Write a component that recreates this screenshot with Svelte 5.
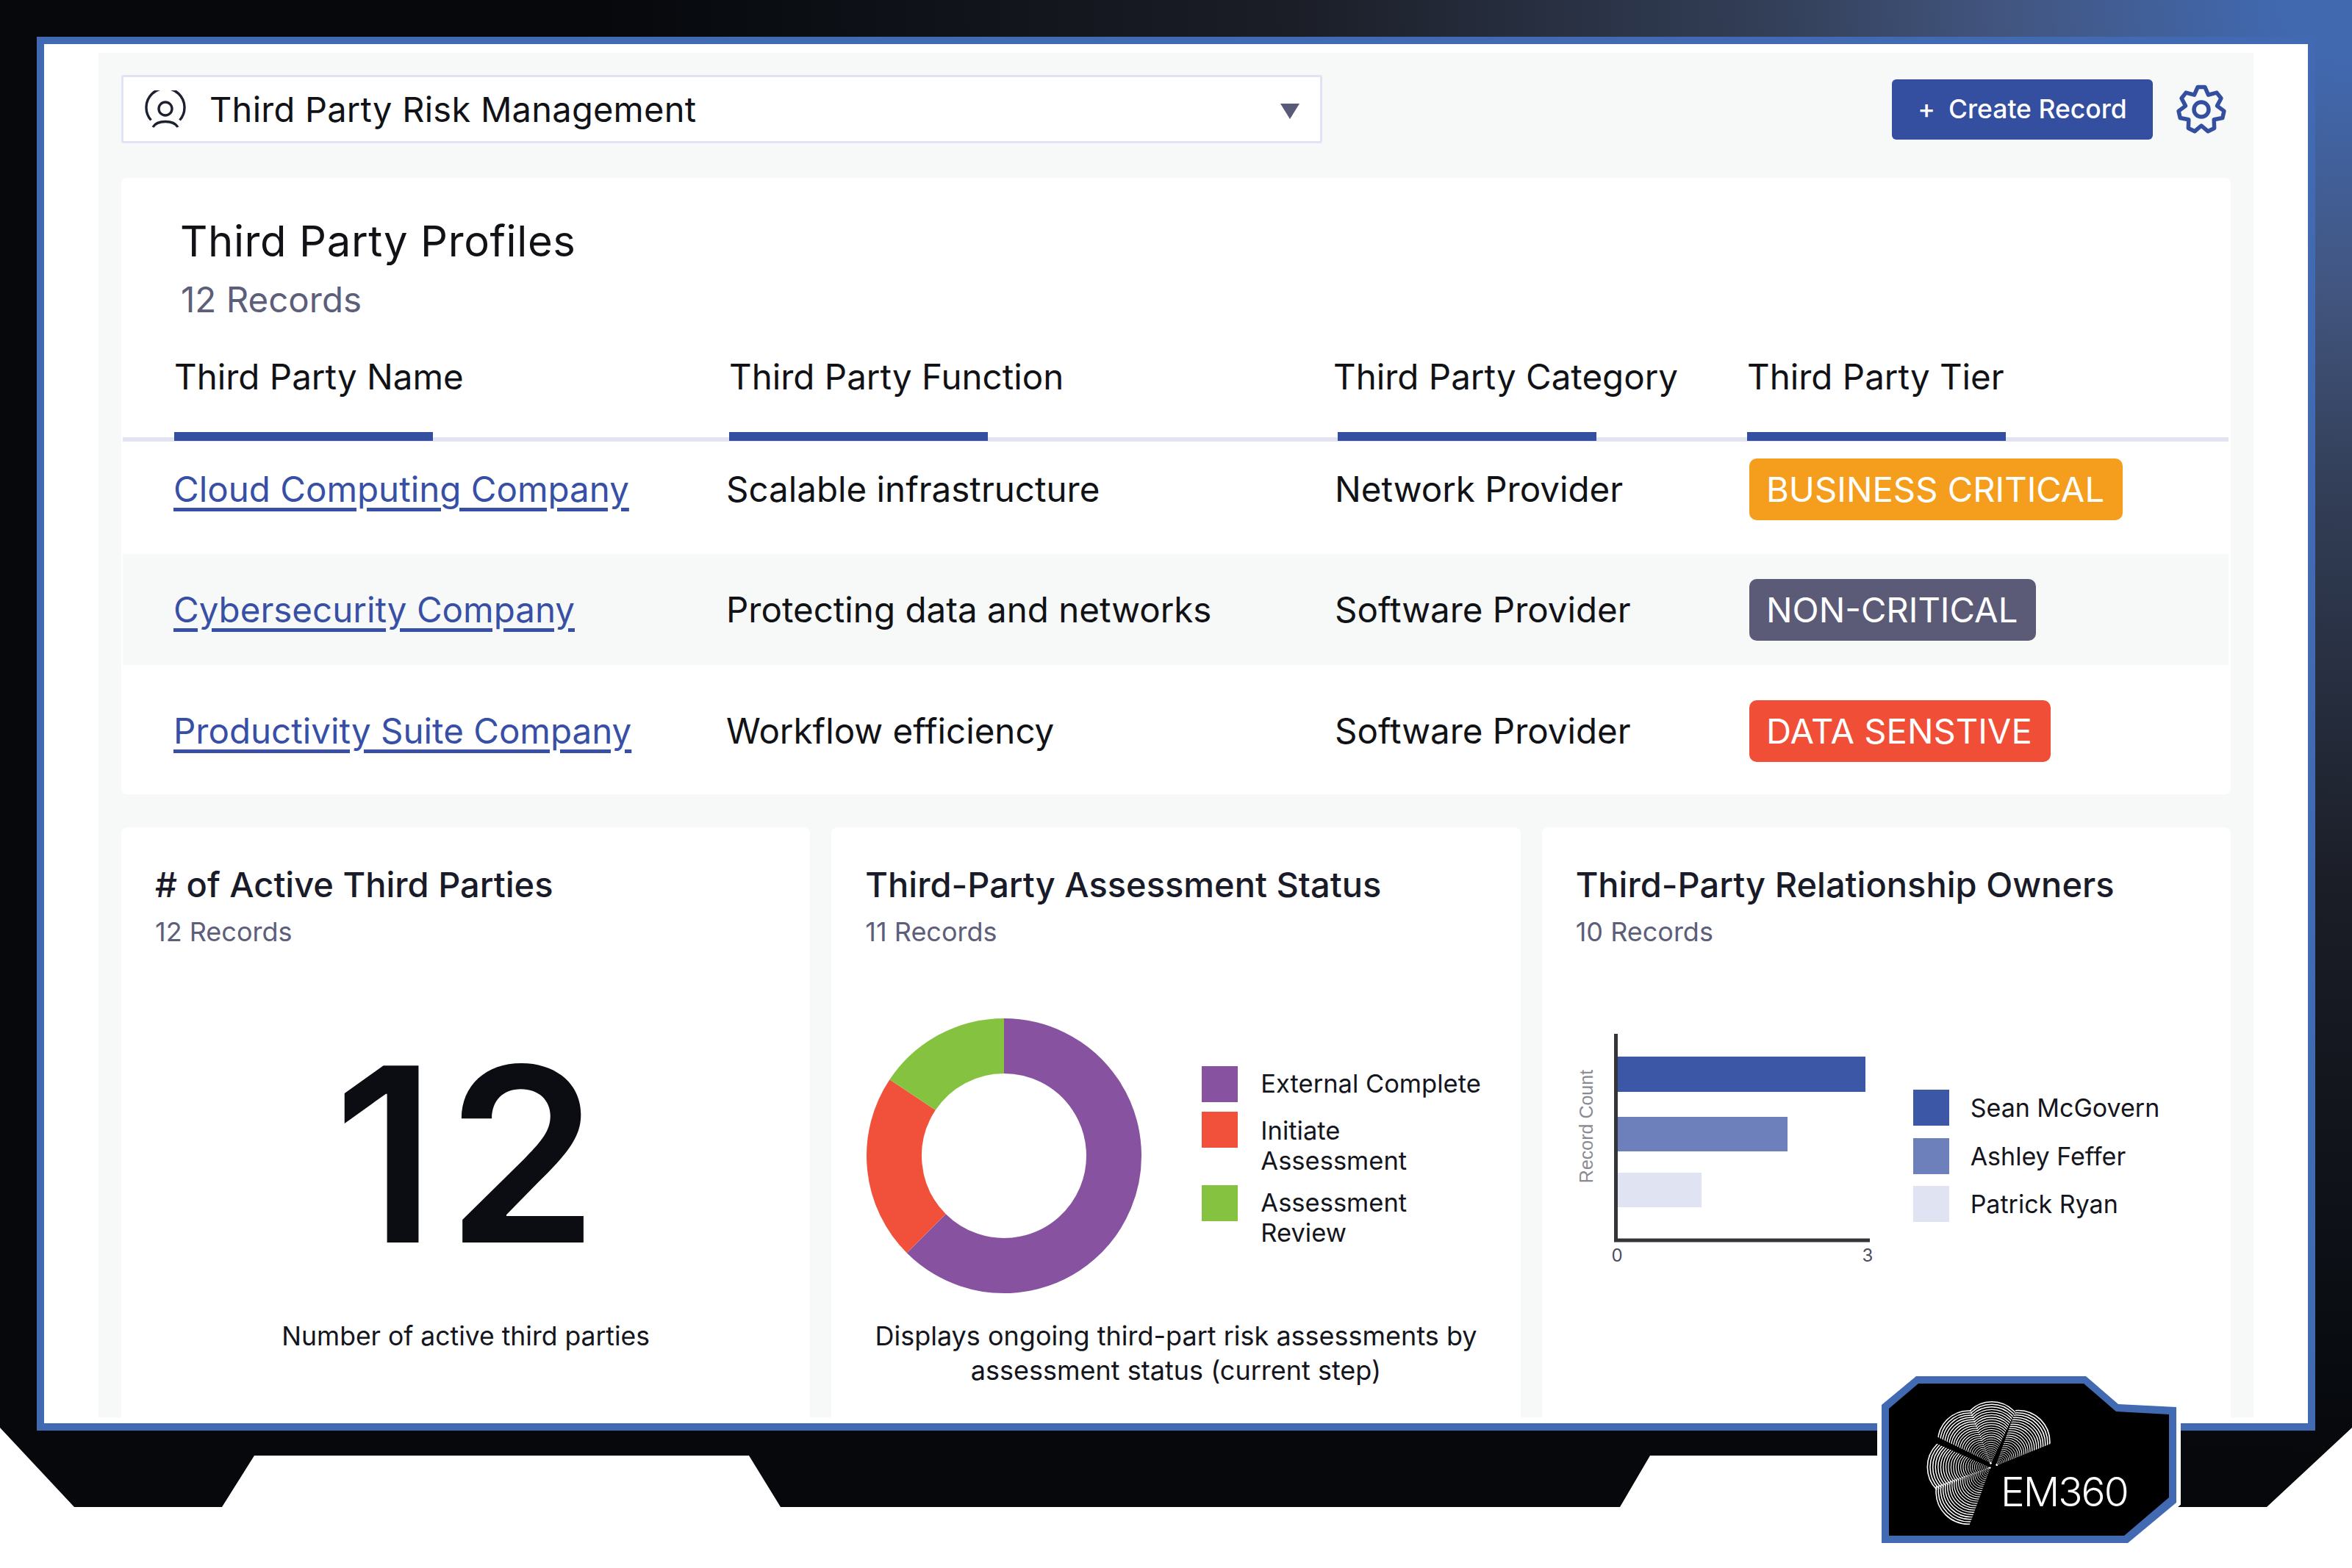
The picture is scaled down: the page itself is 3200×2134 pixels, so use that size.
<script>
  const z = (x, y) => [2600 + x / 3, 1890 + y / 3];
  const petals = [
    { id: 'pa', apex: [325, 305], c: [330, 178], R: 42, clip: [[325, 310], [224, 50], [224, 20], [445, 20], [445, 50]] },
    { id: 'pb', apex: [325, 305], c: [235, 215], R: 42, clip: [[325, 303], [246, 92], [250, 60], [60, 60], [60, 178], [110, 198]] },
    { id: 'pc', apex: [350, 312], c: [440, 215], R: 43, clip: [[346, 315], [425, 92], [432, 60], [600, 60], [600, 213], [562, 228]] },
    { id: 'pd', apex: [325, 320], c: [200, 320], R: 43, clip: [[325, 322], [100, 222], [50, 200], [50, 440], [100, 414]] },
    { id: 'pe', apex: [325, 325], c: [235, 420], R: 44, clip: [[325, 320], [100, 398], [60, 412], [60, 600], [223, 600]] }
  ].map((p) => {
    const a = z(p.apex[0], p.apex[1]);
    const c = z(p.c[0], p.c[1]);
    const d = Math.hypot(c[0] - a[0], c[1] - a[1]);
    const ux = (c[0] - a[0]) / d;
    const uy = (c[1] - a[1]) / d;
    const rings = [];
    for (let i = 1; i <= 28; i++) {
      const r = p.R * Math.pow(i / 28, 1.2);
      rings.push({ r, cx: a[0] + ux * r, cy: a[1] + uy * r, w: 0.6 + (r / p.R) * 1.0 });
    }
    return { id: p.id, rings, pts: p.clip.map((q) => z(q[0], q[1]).join(',')).join(' ') };
  });

  const gearPath = (() => {
    const pts = [];
    for (let k = 0; k < 7; k++) {
      const a = (k * 360) / 7 - 90;
      [[a - 9, 31], [a + 9, 31], [a + 180 / 7, 22]].forEach(([deg, r]) => {
        const t = (deg * Math.PI) / 180;
        pts.push((r * Math.cos(t)).toFixed(2) + ' ' + (r * Math.sin(t)).toFixed(2));
      });
    }
    return 'M' + pts.join('L') + 'Z';
  })();

  const rows = [
    { name: 'Cloud Computing Company', fn: 'Scalable infrastructure', cat: 'Network Provider', tier: 'BUSINESS CRITICAL', tone: 'orange' },
    { name: 'Cybersecurity Company', fn: 'Protecting data and networks', cat: 'Software Provider', tier: 'NON-CRITICAL', tone: 'slate' },
    { name: 'Productivity Suite Company', fn: 'Workflow efficiency', cat: 'Software Provider', tier: 'DATA SENSTIVE', tone: 'red' }
  ];
  const owners = [
    { name: 'Sean McGovern', tone: 'b1' },
    { name: 'Ashley Feffer', tone: 'b2' },
    { name: 'Patrick Ryan', tone: 'b3' }
  ];
  const R = 149.5;
  const arc = (from, to) => {
    const p = (d) => {
      const t = ((d - 90) * Math.PI) / 180;
      return (188 + R * Math.cos(t)).toFixed(2) + ' ' + (188 + R * Math.sin(t)).toFixed(2);
    };
    return `M${p(from)}A${R} ${R} 0 ${to - from > 180 ? 1 : 0} 1 ${p(to)}`;
  };
</script>

<div class="page">
  <div class="window">
    <div class="app">
      <header class="top">
        <div class="select">
          <svg class="user" viewBox="0 0 60 54" aria-hidden="true">
            <path d="M10.5 40.5A26 26 0 1 1 49.5 40.5" />
            <circle cx="30" cy="25" r="9" />
            <path d="M13 50C19 40 41 40 47 50" />
          </svg>
          <span class="select-label">Third Party Risk Management</span>
          <span class="caret"></span>
        </div>
        <button class="create"><span class="plus">+</span>Create Record</button>
        <svg class="gear" viewBox="-38 -38 76 76" aria-hidden="true">
          <path d={gearPath} />
          <circle cx="0" cy="0" r="10" />
        </svg>
      </header>

      <section class="card profiles">
        <h1>Third Party Profiles</h1>
        <p class="count">12 Records</p>
        <div class="table">
          <div class="grid head">
            <div class="th c1"><span>Third Party Name</span><i></i></div>
            <div class="th c2"><span>Third Party Function</span><i></i></div>
            <div class="th c3"><span>Third Party Category</span><i></i></div>
            <div class="th c4"><span>Third Party Tier</span><i></i></div>
          </div>
          {#each rows as row, i}
            <div class="grid row r{i}">
              <a href="#top" class="name">{row.name}</a>
              <span>{row.fn}</span>
              <span>{row.cat}</span>
              <span><b class="tag {row.tone}">{row.tier}</b></span>
            </div>
          {/each}
        </div>
      </section>

      <div class="cards">
        <section class="card widget">
          <h2># of Active Third Parties</h2>
          <p class="sub">12 Records</p>
          <div class="big">12</div>
          <p class="caption one">Number of active third parties</p>
        </section>

        <section class="card widget">
          <h2>Third-Party Assessment Status</h2>
          <p class="sub">11 Records</p>
          <div class="chart">
            <svg class="donut" viewBox="0 0 376 376" aria-hidden="true">
              <path d={arc(0, 225)} stroke="#8753a1" />
              <path d={arc(225, 303.7)} stroke="#f1503a" />
              <path d={arc(303.7, 360)} stroke="#85c240" />
            </svg>
            <ul class="legend status">
              <li><i class="purple"></i><span>External Complete</span></li>
              <li><i class="coral"></i><span>Initiate<br />Assessment</span></li>
              <li><i class="green"></i><span>Assessment<br />Review</span></li>
            </ul>
          </div>
          <p class="caption two">Displays ongoing third-part risk assessments by assessment status (current step)</p>
        </section>

        <section class="card widget">
          <h2>Third-Party Relationship Owners</h2>
          <p class="sub">10 Records</p>
          <div class="chart">
            <svg class="bars" viewBox="2144 1385 416 345" aria-hidden="true">
              <rect class="b1" x="2200" y="1438" width="338" height="48" />
              <rect class="b2" x="2200" y="1520" width="232" height="47" />
              <rect class="b3" x="2200" y="1596" width="115" height="47" />
              <path class="axis" d="M2198.5 1407V1688H2544" />
              <text class="axis-title" transform="translate(2167 1533) rotate(-90)">Record Count</text>
              <text class="tick" x="2200" y="1717">0</text>
              <text class="tick" x="2541" y="1717">3</text>
            </svg>
            <ul class="legend owners">
              {#each owners as o}
                <li><i class={o.tone}></i><span>{o.name}</span></li>
              {/each}
            </ul>
          </div>
        </section>
      </div>
    </div>
  </div>

  <svg class="badge" viewBox="2550 1860 420 250" aria-label="EM360 logo">
    <polygon class="b-out" points="2560,1912 2607,1873 2838,1873 2882,1911 2961,1915 2961,2045 2895,2100 2560,2100" />
    <polygon class="b-in" points="2570,1917 2610,1883 2835,1883 2879,1921 2951,1925 2951,2038 2890,2090 2570,2090" />
    <defs>
      {#each petals as p}
        <clipPath id={p.id}><polygon points={p.pts} /></clipPath>
      {/each}
    </defs>
    {#each petals as p}
      <g clip-path="url(#{p.id})">
        {#each p.rings as c}
          <circle class="ring" cx={c.cx} cy={c.cy} r={c.r} stroke-width={c.w} />
        {/each}
      </g>
    {/each}
    <text class="em" x="2722" y="2050">EM360</text>
  </svg>
</div>

<style>
  :global(body) { margin: 0; }
  * { box-sizing: border-box; }
  .page {
    position: relative;
    width: 3200px;
    height: 2134px;
    padding: 50px 50px 0;
    background: #fff;
    font-family: Inter, "Liberation Sans", sans-serif;
    color: #111216;
    overflow: hidden;
  }
  .page::before {
    content: "";
    position: absolute;
    inset: 0;
    background:
      radial-gradient(ellipse 2400px 2000px at 100% 0, #4169b0 4%, #42557f 20%, #333f58 33%, #1b1e27 60%, #0a0d12 90%, #06080b 100%);
    clip-path: polygon(0 0, 3200px 0, 3200px 1943px, 3084px 2051px, 2560px 2051px, 2560px 1981px, 2245px 1981px, 2204px 2051px, 1062px 2051px, 1019px 1981px, 346px 1981px, 302px 2051px, 101px 2051px, 0 1943px);
  }
  .window {
    position: relative;
    height: 1897px;
    border: 10px solid #426ab2;
    background: #fff;
    padding: 12px 74px 8px;
  }
  .app {
    height: 100%;
    background: #f7f8f8;
    padding: 30px 31px 0;
    display: flex;
    flex-direction: column;
  }
  .top { display: flex; align-items: center; height: 93px; }
  .select {
    width: 1634px;
    height: 93px;
    border: 3px solid #e1e3f2;
    border-radius: 3px;
    background: #fff;
    display: flex;
    align-items: center;
    padding-left: 27px;
  }
  .user { width: 60px; height: 54px; fill: none; stroke: #1d2030; stroke-width: 3.4; margin-top: 2px; }
  .select-label { margin-left: 30px; font-size: 47px; line-height: 60px; letter-spacing: 0.25px; }
  .caret {
    margin-left: auto;
    margin-right: 28px;
    border-left: 13px solid transparent;
    border-right: 13px solid transparent;
    border-top: 21px solid #585a78;
    margin-top: 6px;
  }
  .create {
    margin-left: auto;
    width: 355px;
    height: 82px;
    border: 0;
    border-radius: 6px;
    background: #344ea0;
    color: #fff;
    font: 500 35.5px/82px Inter, sans-serif;
    display: flex;
    align-items: center;
    justify-content: center;
    padding: 0;
  }
  .plus { margin-right: 18px; }
  .gear { width: 76px; height: 76px; margin: 0 2px 0 28px; fill: none; stroke: #344ea0; stroke-width: 5.5; stroke-linejoin: round; }

  .card { background: #fff; border-radius: 8px; }
  .profiles { margin-top: 47px; height: 839px; padding-top: 52px; }
  h1 { margin: 0 0 0 80px; font-size: 58px; line-height: 68px; font-weight: 400; letter-spacing: 0.6px; }
  .count { margin: 17px 0 0 81px; font-size: 47.5px; line-height: 58px; color: #5c5e7a; }
  .table { margin: 46px 3px 0 2px; }
  .grid {
    display: grid;
    grid-template-columns: 751px 828px 564px 1fr;
    padding-left: 70px;
    font-size: 47.5px;
    line-height: 60px;
    align-items: center;
  }
  .head { border-bottom: 6px solid #e2e4f2; align-items: start; height: 118px; }
  .th span { display: block; }
  .th i { display: block; width: 352px; height: 12px; margin-top: 45px; background: #344ea0; }
  .c1 span { margin-left: 0; }
  .c2 span { margin-left: 4px; }
  .c3 span { margin-left: -2px; }
  .c2 i, .c3 i { margin-left: 4px; }
  .c4 i { margin-left: -3px; }
  .c4 span { margin-left: -3px; }
  .row { height: 153px; }
  .r0 { padding-bottom: 23px; }
  .r1 { background: #f7f8f8; height: 151px; }
  .r2 { height: 177px; padding-top: 2px; }
  .name {
    color: #3750a5;
    margin-left: -1px;
    justify-self: start;
    text-decoration: underline;
    text-decoration-thickness: 5px;
    text-underline-offset: 8px;
  }
  .tag {
    display: inline-block;
    font-weight: 400;
    font-size: 47.2px;
    line-height: 84px;
    height: 84px;
    padding: 0 25px 0 23px;
    border-radius: 10px;
    color: #fff;
    vertical-align: middle;
  }
  .orange { background: #f59e1d; }
  .slate { background: #5b5b77; }
  .red { background: #f04e37; }

  .cards { margin-top: 45px; flex: 1; display: grid; grid-template-columns: repeat(3, 1fr); column-gap: 29px; }
  .widget { padding: 49px 0 0 46px; border-radius: 8px 8px 0 0; }
  h2 { margin: 0; font-size: 47px; line-height: 58px; font-weight: 450; color: #1a1b28; }
  .sub { margin: 13px 0 0; font-size: 36px; line-height: 44px; color: #5c5e7a; }
  .big { margin: 111px 46px 0 0; height: 340px; font-size: 331px; line-height: 340px; font-weight: 600; text-align: center; text-indent: 14px; letter-spacing: 14px; color: #0c0d12; }
  .caption { margin: 0 0 0 -46px; text-align: center; font-size: 36px; line-height: 47px; color: #14151d; }
  .caption.one { margin-top: 54px; font-size: 35.5px; }
  .caption.two { margin: 34px 0 0 -46px; padding: 0 30px; }
  .chart { margin-top: 95px; display: flex; align-items: flex-start; }
  .donut { width: 376px; height: 376px; fill: none; stroke-width: 75; margin-left: 1px; flex: none; }
  .legend { list-style: none; margin: 0; padding: 0; display: flex; flex-direction: column; font-size: 34.5px; line-height: 41px; color: #14151d; }
  .legend i { flex: none; display: block; width: 49px; height: 49px; }
  .legend li { display: flex; }
  .status { margin: 66px 0 0 81px; gap: 13px; }
  .status span { margin: 3px 0 0 31px; }
  .status li:nth-child(2) span { margin-top: 5px; }
  .purple { background: #8753a1; }
  .coral { background: #f1503a; }
  .green { background: #85c240; }
  .owners { margin: 98px 0 0 43px; gap: 16.5px; font-size: 34px; }
  .owners li { align-items: center; }
  .owners span { margin-left: 29px; }
  i.b1 { background: #3c57a5; }
  i.b2 { background: #6d80bc; }
  i.b3 { background: #e0e3f2; }
  .bars { width: 416px; height: 345px; flex: none; overflow: visible; }
  rect.b1 { fill: #3c57a5; }
  rect.b2 { fill: #6d80bc; }
  rect.b3 { fill: #e0e3f2; }
  .axis { fill: none; stroke: #333438; stroke-width: 5; }
  .axis-title { font: 25px "Liberation Sans", sans-serif; fill: #8a8b92; text-anchor: middle; }
  .tick { font-size: 24px; fill: #4a4c62; text-anchor: middle; }

  .badge { position: absolute; left: 2550px; top: 1860px; width: 420px; height: 250px; }
  .b-out { fill: #426ab2; stroke: #fff; stroke-width: 12px; paint-order: stroke; }
  .b-in { fill: #000; }
  .ring { fill: none; stroke: #fff; }
  .em { font-size: 55px; font-weight: 300; fill: #fff; letter-spacing: -2px; }
</style>
